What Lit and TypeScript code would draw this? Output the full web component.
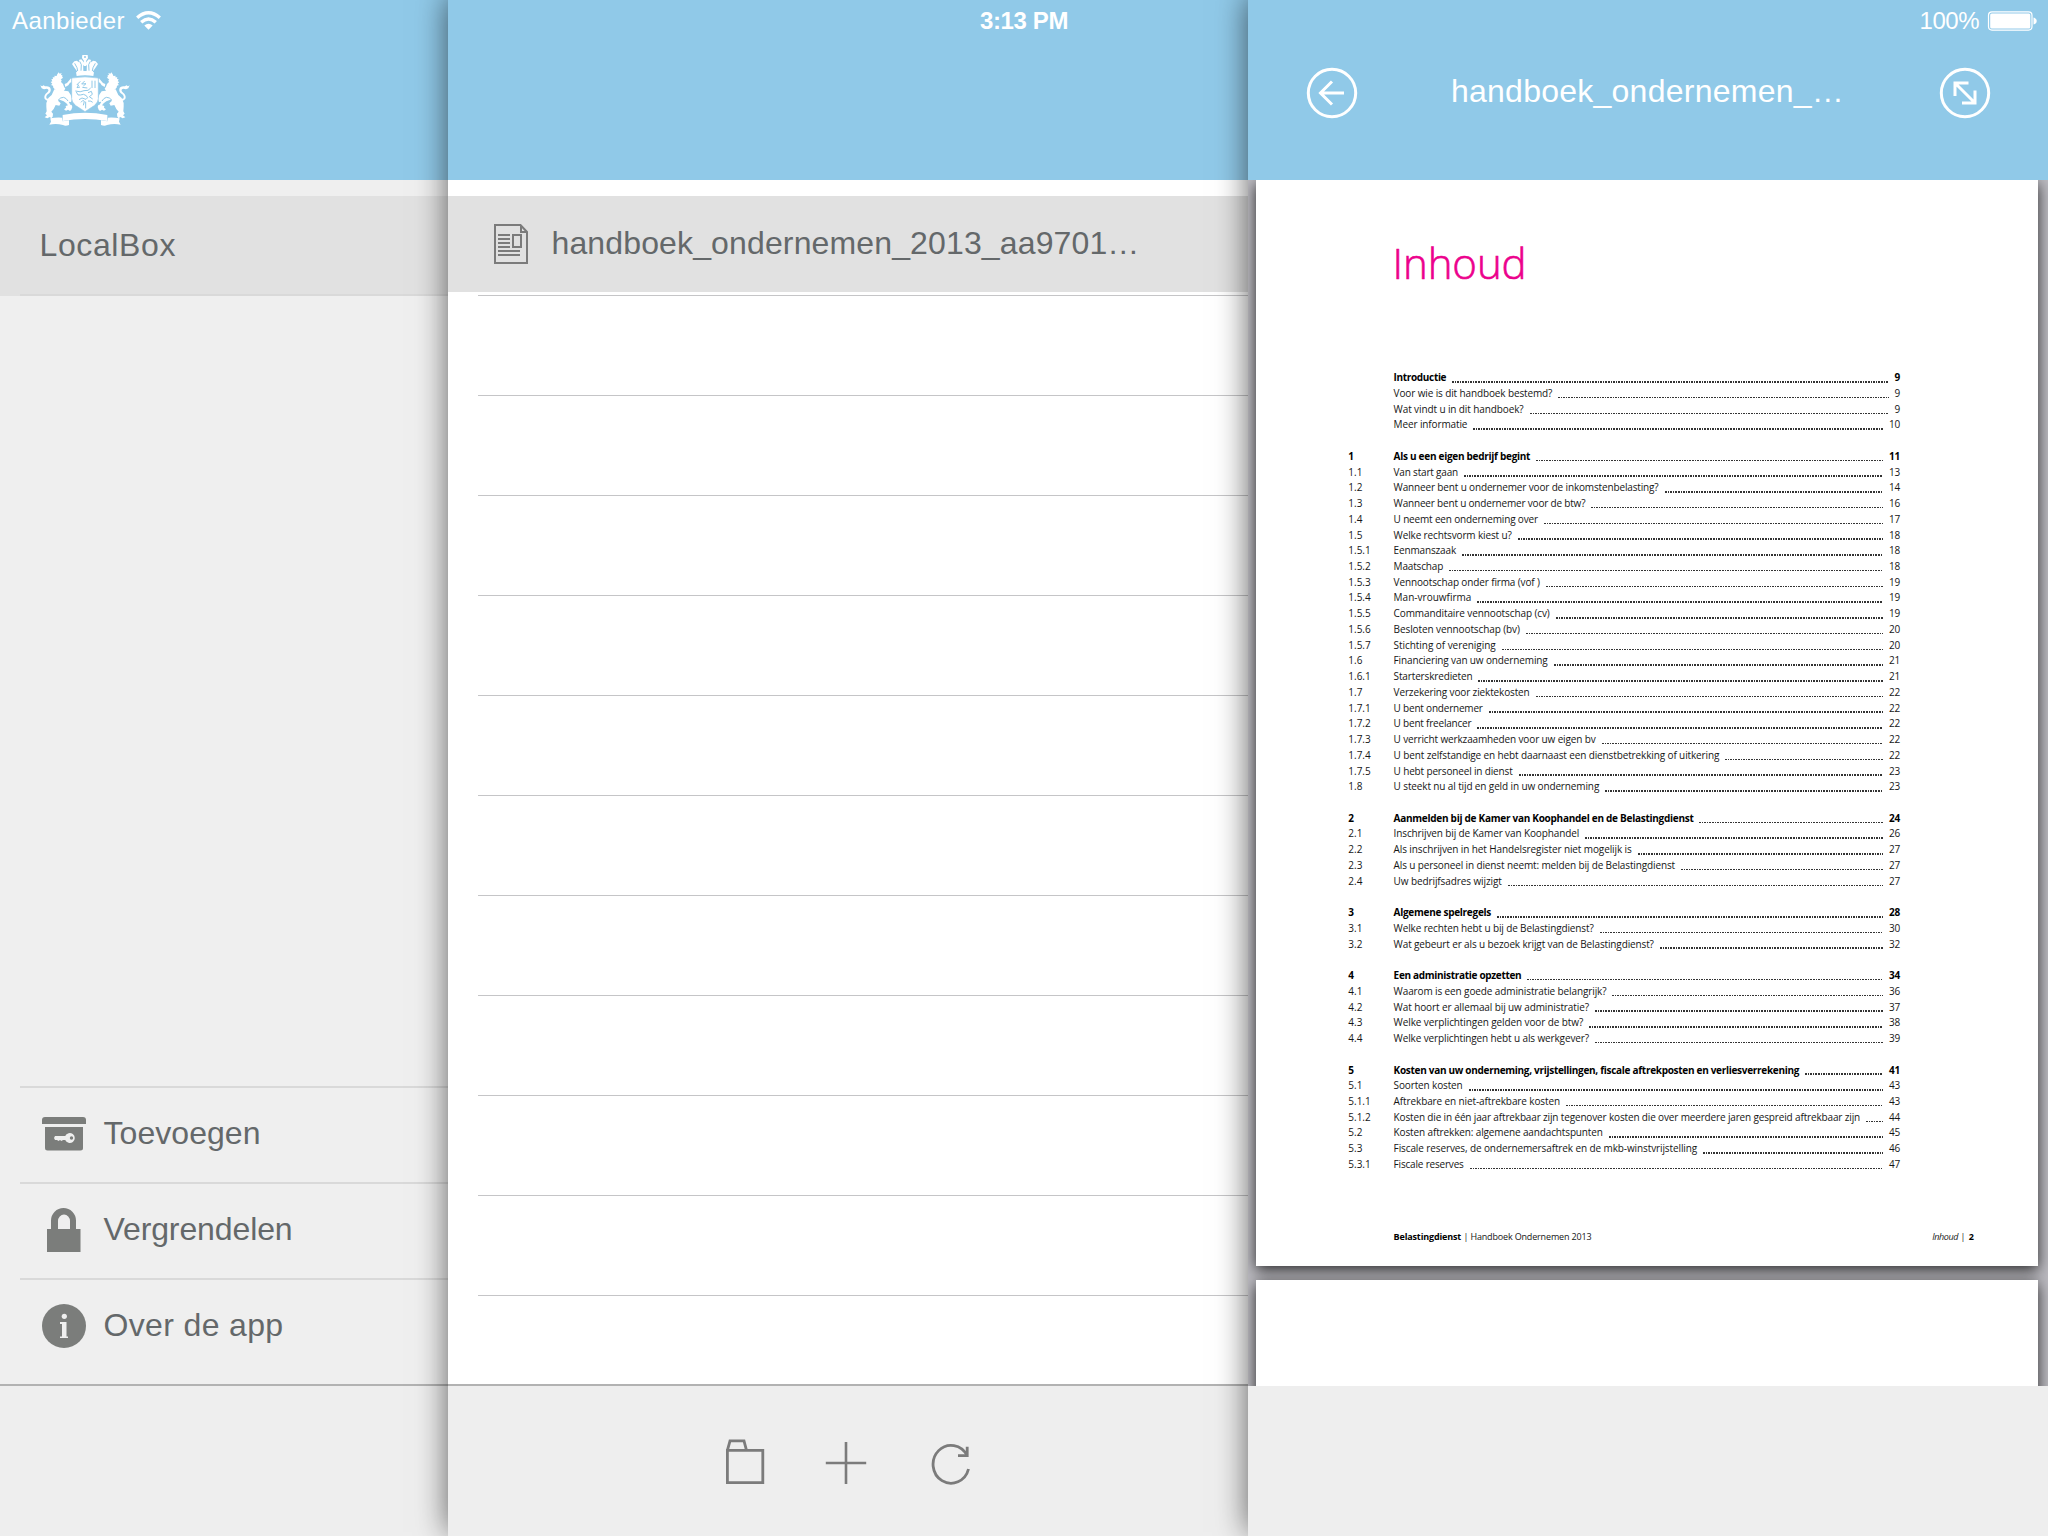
import { LitElement, html, css, svg } from "lit";
import { customElement } from "lit/decorators.js";

interface TocRow {
  nr: string;
  title: string;
  page: string;
  width: number;
  bold?: boolean;
}

const row = (nr: string, title: string, page: string, width: number, bold = false): TocRow => ({ nr, title, page, width, bold });

const TOC: TocRow[][] = [
  [
    row("", "Introductie", "9", 52.6, true),
    row("", "Voor wie is dit handboek bestemd?", "9", 158.7),
    row("", "Wat vindt u in dit handboek?", "9", 129.9),
    row("", "Meer informatie", "10", 73.7),
  ],
  [
    row("1", "Als u een eigen bedrijf begint", "11", 136.6, true),
    row("1.1", "Van start gaan", "13", 64.4),
    row("1.2", "Wanneer bent u ondernemer voor de inkomstenbelasting?", "14", 264.9),
    row("1.3", "Wanneer bent u ondernemer voor de btw?", "16", 191.7),
    row("1.4", "U neemt een onderneming over", "17", 144.3),
    row("1.5", "Welke rechtsvorm kiest u?", "18", 118),
    row("1.5.1", "Eenmanszaak", "18", 62.4),
    row("1.5.2", "Maatschap", "18", 49.5),
    row("1.5.3", "Vennootschap onder firma (vof )", "19", 146.3),
    row("1.5.4", "Man-vrouwfirma", "19", 77.8),
    row("1.5.5", "Commanditaire vennootschap (cv)", "19", 156.1),
    row("1.5.6", "Besloten vennootschap (bv)", "20", 126.3),
    row("1.5.7", "Stichting of vereniging", "20", 102),
    row("1.6", "Financiering van uw onderneming", "21", 154),
    row("1.6.1", "Starterskredieten", "21", 78.8),
    row("1.7", "Verzekering voor ziektekosten", "22", 136),
    row("1.7.1", "U bent ondernemer", "22", 89.1),
    row("1.7.2", "U bent freelancer", "22", 77.8),
    row("1.7.3", "U verricht werkzaamheden voor uw eigen bv", "22", 202),
    row("1.7.4", "U bent zelfstandige en hebt daarnaast een dienstbetrekking of uitkering", "22", 325.7),
    row("1.7.5", "U hebt personeel in dienst", "23", 119),
    row("1.8", "U steekt nu al tijd en geld in uw onderneming", "23", 205.6),
  ],
  [
    row("2", "Aanmelden bij de Kamer van Koophandel en de Belastingdienst", "24", 299.9, true),
    row("2.1", "Inschrijven bij de Kamer van Koophandel", "26", 185.5),
    row("2.2", "Als inschrijven in het Handelsregister niet mogelijk is", "27", 238),
    row("2.3", "Als u personeel in dienst neemt: melden bij de Belastingdienst", "27", 281.4),
    row("2.4", "Uw bedrijfsadres wijzigt", "27", 108.2),
  ],
  [
    row("3", "Algemene spelregels", "28", 97.4, true),
    row("3.1", "Welke rechten hebt u bij de Belastingdienst?", "30", 200),
    row("3.2", "Wat gebeurt er als u bezoek krijgt van de Belastingdienst?", "32", 260.2),
  ],
  [
    row("4", "Een administratie opzetten", "34", 127.8, true),
    row("4.1", "Waarom is een goede administratie belangrijk?", "36", 212.8),
    row("4.2", "Wat hoort er allemaal bij uw administratie?", "37", 195.3),
    row("4.3", "Welke verplichtingen gelden voor de btw?", "38", 189.6),
    row("4.4", "Welke verplichtingen hebt u als werkgever?", "39", 195.3),
  ],
  [
    row("5", "Kosten van uw onderneming, vrijstellingen, fiscale aftrekposten en verliesverrekening", "41", 405.5, true),
    row("5.1", "Soorten kosten", "43", 69),
    row("5.1.1", "Aftrekbare en niet-aftrekbare kosten", "43", 166.4),
    row("5.1.2", "Kosten die in één jaar aftrekbaar zijn tegenover kosten die over meerdere jaren gespreid aftrekbaar zijn", "44", 466.4),
    row("5.2", "Kosten aftrekken: algemene aandachtspunten", "45", 209.2),
    row("5.3", "Fiscale reserves, de ondernemersaftrek en de mkb-winstvrijstelling", "46", 303.5),
    row("5.3.1", "Fiscale reserves", "47", 70.1),
  ],
];

/* Left half of the coat of arms; the right half is its mirror image. */
const supporter = svg`
  <path d="M176 217l3 4 6-2-2 5 5 3-2 3 3 2-3 4-4 1 3 4-2 5 6 6 3 8 4 6-5 8-14-1-10-3-7-7-1-6-6-2 4-4-5-5 5-2-3-6 5-1-1-5 6 0-1-5 7 1 1-4z"/>
  <path d="M194 252l7-3 7-8 5-6 3 5-3 3 3 3-6 2-5 8-9 5z"/>
  <path d="M163 268q14 4 30 4l12 2 7 10 4 12-3 10-7-1 5 9 4 1 2 6-3 8-4 4-6-4-6 3-6-4 6-5-1-5 7-2-5-6-8-6-12-5-5 3 8 8-4 7-11-2-6 12-7 8 5 6-1 9-4 5-5-4-7 4-8-3 7-6-5-5 4-7-1-14 0-11 6-15 10-9z"/>
  <path d="M121 256l5 3 5-3 4 3q15-2 17 8t-9 16q-7 6-4 12l9 3 3-6 3 4-2 7q-12 2-17-5t2-17q10-8 8-12-3-5-13-1l-7-3z"/>
  <path d="M216 192l7-8 8-2 5 5 2-8 6-1 5 6 1 12 1 24-17 1-4-9-6-8-4-6z"/>
  <path d="M188 345q34-7 67-7v19q-33 0-67 6z"/>
  <path d="M151 355q16-3 35-2l2 11 19-3v14q-11 4-18 0-21-6-41-1l5-9z"/>`;

const crest = svg`
  <svg class="crest" viewBox="120 162 270 216" width="90" height="72" fill="#fff">
    <g>${supporter}</g>
    <g transform="matrix(-1 0 0 1 510 0)">${supporter}</g>
    <g fill="none" stroke="#90c9e8" stroke-width="3">
      <path d="M224 190l7 13 2 10M239 184l5 10-1 18M286 190l-7 13-2 10M271 184l-5 10 1 18M252 192v20M258 192v20"/>
      <path d="M174 301q8-10 17-9 8 2 13 11M336 301q-8-10-17-9-8 2-13 11"/>
    </g>
    <path d="M247 165h16l1 9-6 9 5 8-5 7h-6l-5-7 5-8-6-9z"/>
    <circle cx="255" cy="171" r="3" fill="#90c9e8"/>
    <path d="M228 217q27-8 54 0l-2 11q-25-5-50 0z"/>
    <path d="M215 234q40-7 80 0l0 62q0 10-11 20l-29 19-29-19q-11-10-11-20z" stroke="#90c9e8" stroke-width="2"/>
    <g fill="none" stroke="#90c9e8" stroke-width="3">
      <path d="M241 244l-10 10 5 1-5 8 9-2M254 243l-9 9 13-1-8 7M247 262l15 2M276 242v22M285 242v22"/>
      <path d="M226 273q16 5 26-1l12-1 8-7M229 276q4 13 12 9 10-5 18 2t-1 11l-12-4-9 5M264 278l10-4 3 9-9 7 10 7M243 307q6-10 10-3l-3 12M257 305v20M264 303q10-1 14 4"/>
    </g>
  </svg>`;

@customElement("app-root")
export class AppRoot extends LitElement {
  static styles = css`
    :host {
      display: block;
      width: 2048px;
      height: 1536px;
      overflow: hidden;
      font-family: "Liberation Sans", Arial, sans-serif;
      background: #eeeeee;
    }
    * { box-sizing: border-box; }
    svg { display: block; flex: none; }
    .shell { display: grid; grid-template-columns: 448px 800px 800px; height: 1536px; }
    .panel { display: flex; flex-direction: column; min-width: 0; height: 1536px; background: #efefef; position: relative; }
    .panel.files { background: #fff; z-index: 1; box-shadow: 0 -4px 30px rgba(0, 0, 0, 0.6); }
    .panel.viewer { z-index: 2; box-shadow: 0 -4px 30px rgba(0, 0, 0, 0.6); }
    .header { flex: none; height: 180px; background: #90c9e8; color: #fff; }
    .status { display: flex; align-items: center; height: 41px; font-size: 24px; line-height: 41px; white-space: nowrap; }
    .status.carrier { padding-left: 12px; gap: 11px; }
    .status.clock { padding-left: 532px; font-weight: 700; }
    .status.power { justify-content: flex-end; padding-right: 11px; gap: 8px; }
    .crest { margin: 13px 0 0 40px; }
    .fit { display: inline-block; white-space: pre; flex: none; }
    .label { font-size: 32px; color: #64686a; }
    .spacer { flex: 1; }

    .selected { display: flex; align-items: center; flex: none; height: 100px; margin-top: 16px; padding: 0 0 2px 39.5px; background: linear-gradient(#d9d9d9, #d9d9d9) 20px 98px no-repeat, #e1e1e1; }
    .entry { display: flex; align-items: center; height: 96px; margin-left: 20px; padding-left: 22px; gap: 17.5px; border-top: 2px solid #d9d9d9; padding-bottom: 2px; }
    .entry .label { padding-bottom: 2px; }
    .foot { flex: none; height: 152px; background: #eeeeee; border-top: 2px solid #b2b2b2; }
    .menu { padding-bottom: 10px; }

    .file { display: flex; align-items: center; flex: none; height: 96px; margin-top: 16px; padding-left: 46px; gap: 23.5px; background: #e1e1e1; }
    .file .label { padding-bottom: 1px; }
    .rules { flex: 1; margin-left: 30px; margin-top: 3px; background: repeating-linear-gradient(#c5c5c7 0 1px, transparent 1px 100px); }
    .tools { display: flex; align-items: flex-start; padding: 52px 0 0 277px; gap: 60px; }

    .nav { display: flex; align-items: center; justify-content: space-between; padding: 0 57px 0 58px; height: 104px; }
    .nav .title { font-size: 32px; padding-bottom: 3px; margin-left: -2px; }
    .doc { flex: 1; min-height: 0; overflow: hidden; background: #bcbbc1; padding: 0 10px 0 8px; }
    .page { background: #fff; box-shadow: 0 4px 14px rgba(0, 0, 0, 0.78); }
    .page.first { display: flex; flex-direction: column; height: 1086px; font-family: "Open Sans", "Noto Sans", sans-serif; color: #151515; }
    .page.next { margin-top: 14px; height: 200px; }
    .heading { margin: 0; padding: 55px 0 0 136.5px; height: 190.2px; font-size: 42px; line-height: 56px; font-weight: 300; color: #ec008c; -webkit-text-stroke: 0.6px #ec008c; }
    .group { padding: 0 138px 0 92.3px; margin-bottom: 15.745px; }
    .line { display: flex; align-items: center; height: 15.745px; font-size: 10px; line-height: 15.745px; white-space: nowrap; }
    .line.bold { font-weight: 700; color: #000; }
    .nr { width: 45.3px; flex: none; }
    .leader { flex: 1; height: 1.5px; margin: 7.5px 6px 0; background: repeating-linear-gradient(90deg, #333 0 1.6px, transparent 1.6px 2.6px); }
    .pagefoot { display: flex; justify-content: space-between; padding: 0 64px 0 137.6px; margin-top: 41.3px; font-size: 9px; line-height: 14px; }
    .pagefoot b { font-weight: 700; color: #000; }
    .pagefoot i { font-style: italic; }
    .viewer .foot { height: 150px; border-top: 0; }
  `;

  firstUpdated() {
    this.fitLabels();
    document.fonts?.ready.then(() => this.fitLabels());
  }

  /* Tracks each label so that it takes up its typeset width. */
  private fitLabels() {
    this.renderRoot.querySelectorAll<HTMLElement>("[data-width]").forEach((el) => {
      el.style.letterSpacing = "0px";
      const natural = el.getBoundingClientRect().width;
      const count = (el.textContent ?? "").length;
      el.style.letterSpacing = `${(Number(el.dataset.width) - natural) / count}px`;
    });
  }

  private fit(text: string, width: number, cls = "") {
    return html`<span class="fit ${cls}" data-width=${width}>${text}</span>`;
  }

  private sidebar() {
    return html`
      <section class="panel">
        <header class="header">
          <div class="status carrier">
            ${this.fit("Aanbieder", 113)}
            <svg width="25" height="19" viewBox="0 0 25 19" fill="none" stroke="#fff" stroke-width="3.4">
              <path d="M1.2 6.800Q12.500-3.200 23.800 6.800M5.200 11.200Q12.500 4.800 19.800 11.200" />
              <path d="M12.500 18.800L8.300 14.500Q12.500 11 16.700 14.500Z" fill="#fff" stroke="none" />
            </svg>
          </div>
          ${crest}
        </header>
        <div class="selected">${this.fit("LocalBox", 136.5, "label")}</div>
        <div class="spacer"></div>
        <nav class="menu">
          <div class="entry">
            <svg width="44" height="44" viewBox="0 0 44 44" fill="#7b7d7b">
              <path d="M3 5h38a3 3 0 0 1 3 3v4H0V8a3 3 0 0 1 3-3z" />
              <path d="M3 15h38v21a2.500 2.500 0 0 1-2.500 2.500h-33A2.500 2.500 0 0 1 3 36z" />
              <path d="M13 24h10.200a5 5 0 1 1 0 4H21l-1.500 1-1.500-1-1.500 1-1.500-1h-2l-1-2z" fill="#efefef" />
              <circle cx="29.500" cy="26" r="1.700" />
            </svg>
            ${this.fit("Toevoegen", 157, "label")}
          </div>
          <div class="entry">
            <svg width="44" height="44" viewBox="0 0 44 44" fill="#7b7d7b">
              <path d="M5 21h4v-8.500a12.500 12.500 0 0 1 25 0V21h4.500v23H5zM16 21h12v-8a6 6.500 0 0 0-12 0z" />
            </svg>
            ${this.fit("Vergrendelen", 189, "label")}
          </div>
          <div class="entry">
            <svg width="44" height="44" viewBox="0 0 44 44">
              <circle cx="22" cy="22" r="22" fill="#7b7d7b" />
              <circle cx="22.300" cy="12.300" r="2.600" fill="#efefef" />
              <path d="M18 18h6.500v14.500H26V34h-8v-1.500h2V20h-2z" fill="#efefef" />
            </svg>
            ${this.fit("Over de app", 180, "label")}
          </div>
        </nav>
        <footer class="foot"></footer>
      </section>`;
  }

  private files() {
    return html`
      <section class="panel files">
        <header class="header">
          <div class="status clock">${this.fit("3:13 PM", 88)}</div>
        </header>
        <div class="file">
          <svg width="34" height="40" viewBox="0 0 34 40" fill="none" stroke="#7b7b7b" stroke-width="2">
            <path d="M1 1h25.500L33 8v31H1zM27 1v7H33" />
            <path d="M4 11h12M4 15h12M4 19h12M4 23h12M4 27h22M4 31h22M19 11h8v12h-8z" />
          </svg>
          ${this.fit("handboek_ondernemen_2013_aa9701…", 588, "label")}
        </div>
        <div class="rules"></div>
        <footer class="foot tools">
          <svg width="40" height="48" viewBox="0 0 40 48" fill="none" stroke="#7b7b7b" stroke-width="2.800">
            <path d="M2.400 12.400H37.800V44.600H2.400zM2.400 12.400L5 2.900H19L21.500 12.400" />
          </svg>
          <svg width="42" height="48" viewBox="0 0 42 48" stroke="#7b7b7b" stroke-width="2.600">
            <path d="M21 4v42M.8 25h40.400" />
          </svg>
          <svg width="44" height="48" viewBox="0 0 44 48" fill="none" stroke="#7b7b7b" stroke-width="2.800">
            <path d="M41.500 31A18 18.900 0 1 1 40 17.500" />
            <path d="M40.200 8.800V17.600H31" />
          </svg>
        </footer>
      </section>`;
  }

  private tocLine(r: TocRow) {
    return html`
      <div class="line ${r.bold ? "bold" : ""}">
        <span class="nr">${r.nr}</span>
        ${this.fit(r.title, r.width)}
        <span class="leader"></span>
        ${this.fit(r.page, r.page.length * 5.5)}
      </div>`;
  }

  private viewer() {
    return html`
      <section class="panel viewer">
        <header class="header">
          <div class="status power">
            ${this.fit("100%", 59.5)}
            <svg width="50" height="20" viewBox="0 0 50 20">
              <rect x="1.500" y=".9" width="43.500" height="18.200" rx="3.500" fill="none" stroke="#fff" stroke-width="1.200" />
              <rect x="3.200" y="2.600" width="40.100" height="14.800" rx="1.500" fill="#fff" />
              <path d="M46.500 6.500q3.200 1 3.200 3.500t-3.200 3.500z" fill="#fff" />
            </svg>
          </div>
          <div class="nav">
            <svg width="52" height="52" viewBox="0 0 52 52" fill="none" stroke="#fff" stroke-width="3">
              <circle cx="26" cy="26" r="23.700" />
              <path d="M14.500 26H38M26 14.500L14.500 26 26 37.500" />
            </svg>
            ${this.fit("handboek_ondernemen_…", 393, "title")}
            <svg width="52" height="52" viewBox="0 0 52 52" fill="none" stroke="#fff" stroke-width="3">
              <circle cx="26" cy="26" r="23.700" />
              <path d="M16 16L36 36M29.500 16H16V29M36 23.500V36H23" />
            </svg>
          </div>
        </header>
        <div class="doc">
          <article class="page first">
            <h1 class="heading">${this.fit("Inhoud", 134)}</h1>
            ${TOC.map((group) => html`<div class="group">${group.map((r) => this.tocLine(r))}</div>`)}
            <div class="pagefoot">
              <span><b class="fit" data-width="67.5">Belastingdienst</b> ${this.fit("| Handboek Ondernemen 2013", 128)}</span>
              <span><i class="fit" data-width="26">Inhoud</i> ${this.fit("|", 6)} <b>2</b></span>
            </div>
          </article>
          <article class="page next"></article>
        </div>
        <footer class="foot"></footer>
      </section>`;
  }

  render() {
    return html`<main class="shell">${this.sidebar()}${this.files()}${this.viewer()}</main>`;
  }
}
